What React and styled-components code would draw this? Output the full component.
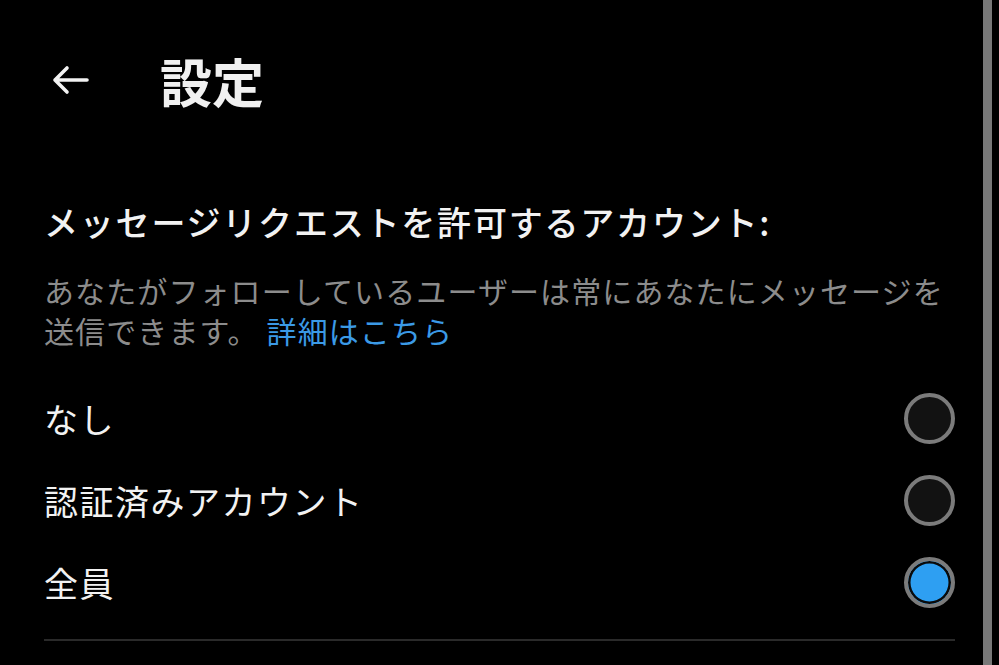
import styled, { createGlobalStyle } from "styled-components";

const GlobalStyle = createGlobalStyle`
  html, body {
    margin: 0;
    padding: 0;
    background: #000;
  }
  body {
    font-family: "Noto Sans CJK JP", "Noto Sans", sans-serif;
    color: #f2f2f2;
  }
`;

const options = [
  { id: "none", label: "なし", checked: false },
  { id: "verified", label: "認証済みアカウント", checked: false },
  { id: "all", label: "全員", checked: true },
];

const BackArrow = () => (
  <svg width="40" height="32" viewBox="0 0 40 32" fill="none">
    <path
      d="M37 16H5M17 4L5 16l12 12"
      stroke="#f2f2f2"
      strokeWidth="3.6"
      strokeLinecap="round"
      strokeLinejoin="round"
    />
  </svg>
);

const App = () => {
  return (
    <Screen>
      <GlobalStyle />
      <Content>
        <Header>
          <BackButton>
            <BackArrow />
          </BackButton>
          <Title>設定</Title>
        </Header>
        <Section>
          <Heading>メッセージリクエストを許可するアカウント:</Heading>
          <Description>
            あなたがフォローしているユーザーは常にあなたにメッセージを送信できます。 <Link>詳細はこちら</Link>
          </Description>
          <OptionList>
            {options.map((o) => (
              <OptionRow key={o.id}>
                <OptionLabel>{o.label}</OptionLabel>
                <Radio checked={o.checked} />
              </OptionRow>
            ))}
          </OptionList>
          <Divider />
        </Section>
      </Content>
      <ScrollBar />
    </Screen>
  );
};
export default App;

/*Styled Components*/

const Screen = styled.div`
  display: flex;
  width: 999px;
  height: 665px;
  overflow: hidden;
  background: #000;
`;

const Content = styled.div`
  flex: 1;
  padding: 0 28px 0 44px;
`;

const Header = styled.div`
  display: flex;
  align-items: center;
  height: 160px;
`;

const BackButton = styled.button`
  background: none;
  border: none;
  padding: 0;
  margin-left: 6px;
  width: 110px;
  display: flex;
  align-items: center;
`;

const Title = styled.h1`
  margin: 0;
  font-size: 52px;
  font-weight: 700;
  color: #f0f0f0;
`;

const Section = styled.div`
  margin-top: 40px;
`;

const Heading = styled.h2`
  margin: 0;
  font-size: 34px;
  font-weight: 500;
  line-height: 44px;
  letter-spacing: 1.8px;
  color: #f2f2f2;
`;

const Description = styled.p`
  margin: 26px 0 0;
  font-size: 30px;
  line-height: 40px;
  letter-spacing: 1.1px;
  color: #8c8c8c;
`;

const Link = styled.span`
  color: #3b9ae6;
`;

const OptionList = styled.div`
  display: flex;
  flex-direction: column;
  margin-top: 27px;
`;

const OptionRow = styled.div`
  display: flex;
  align-items: center;
  justify-content: space-between;
  height: 82px;
`;

const OptionLabel = styled.span`
  font-size: 34px;
  letter-spacing: 1.5px;
  color: #f2f2f2;
`;

const Radio = styled.span`
  box-sizing: border-box;
  width: 51px;
  height: 51px;
  border-radius: 50%;
  border: 4px solid #7b7b7b;
  background: ${(p) => (p.checked ? "#2e9ff2" : "#121212")};
  box-shadow: ${(p) => (p.checked ? "inset 0 0 0 2.5px #0a0a0a" : "none")};
`;

const Divider = styled.hr`
  margin: 16px 0 0;
  border: none;
  height: 2px;
  background: #2a2a2a;
`;

const ScrollBar = styled.div`
  width: 9px;
  height: 100%;
  background: #787878;
  margin-right: 7px;
`;
